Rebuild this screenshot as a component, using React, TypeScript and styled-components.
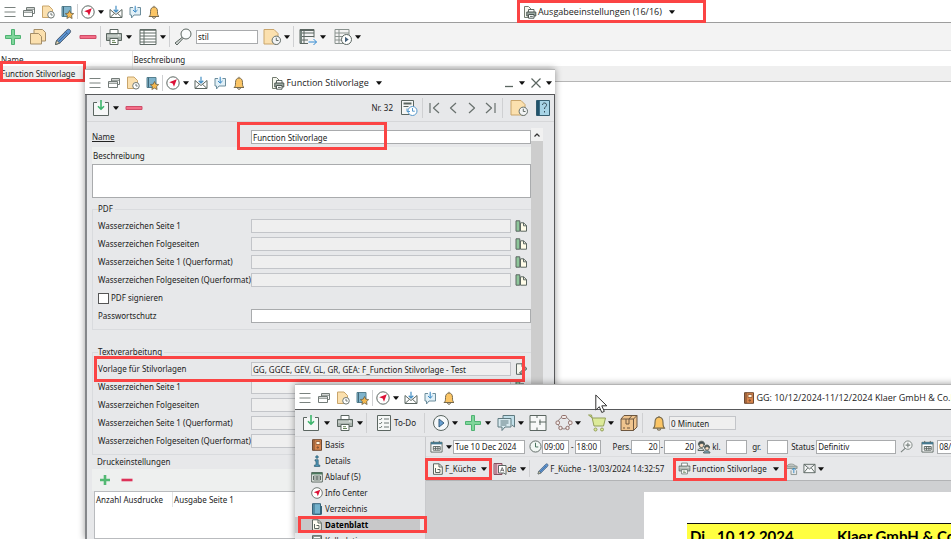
import React from "react";
import styled, { createGlobalStyle, css } from "styled-components";

const GlobalStyle = createGlobalStyle`
  *, *::before, *::after { box-sizing: border-box; }
  html, body { margin: 0; background: #fff; }
  body, button, input, textarea, select, table {
    font-family: "Noto Sans", "Open Sans", sans-serif;
    font-size: 8px;
    line-height: 12px;
    color: #222;
  }
`;

/* ---------- shared controls ---------- */

const IconButton = styled.button<{ $w?: number; $ml?: number }>`
  display: flex;
  flex: none;
  align-items: center;
  justify-content: center;
  width: ${(p) => p.$w ?? 18}px;
  margin: 0 0 0 ${(p) => p.$ml ?? 0}px;
  padding: 0;
  border: 0;
  background: none;
`;

const CaretShape = styled.svg`
  display: block;
  width: 6px;
  height: 4px;
  fill: #111;
`;

const Caret = ({ ml = 3, label = "Menü öffnen" }: { ml?: number; label?: string }) => (
  <IconButton $w={6} $ml={ml} aria-label={label}>
    <CaretShape viewBox="0 0 6 4"><path d="M0 .3h6L3.6 3.6H2.4z" /></CaretShape>
  </IconButton>
);

const Separator = styled.span<{ $l?: number; $r?: number }>`
  flex: none;
  align-self: stretch;
  width: 1px;
  margin: 3px ${(p) => p.$r ?? 3}px 3px ${(p) => p.$l ?? 3}px;
  background: #cfd0d2;
`;

const Spacer = styled.span<{ $grow: number }>`
  flex: ${(p) => p.$grow} 1 0;
`;

const Field = styled.input<{ $w?: number; $ml?: number; $muted?: boolean; $end?: boolean }>`
  flex: none;
  width: ${(p) => (p.$w ? `${p.$w}px` : "100%")};
  min-width: 0;
  height: 14px;
  margin: 0 0 0 ${(p) => p.$ml ?? 0}px;
  padding: 0 1px;
  border: 1px solid #a9abad;
  border-radius: 0;
  outline: 0;
  background: #fff;
  text-align: ${(p) => (p.$end ? "right" : "left")};
  ${(p) => p.$muted && css`
    border-color: #c3c5c9;
    background: #efefef;
  `}
`;

const Text = styled.span<{ $ml?: number }>`
  flex: none;
  margin-left: ${(p) => p.$ml ?? 0}px;
  white-space: nowrap;
`;

const LabelText = styled.label<{ $ml?: number; $w?: number }>`
  flex: none;
  width: ${(p) => (p.$w ? `${p.$w}px` : "auto")};
  margin-left: ${(p) => p.$ml ?? 0}px;
  white-space: nowrap;
`;

const TextButton = styled.button<{ $ml?: number; $gap?: number }>`
  display: flex;
  flex: none;
  align-items: center;
  gap: ${(p) => p.$gap ?? 2}px;
  margin: 0 0 0 ${(p) => p.$ml ?? 0}px;
  padding: 0;
  border: 0;
  background: none;
  white-space: nowrap;
`;

/* ---------- icons ---------- */

const Drawing = styled.svg`
  display: block;
  flex: none;
  overflow: visible;
  stroke-linejoin: round;
`;

type IconProps = { s?: number };
const INK = "#5b6661";

const icon = (size: number, box: number, body: React.ReactNode) =>
  function Icon({ s = size }: IconProps) {
    return (
      <Drawing width={s} height={s} viewBox={`0 0 ${box} ${box}`} fill="none" stroke={INK} strokeWidth={1} aria-hidden="true">
        {body}
      </Drawing>
    );
  };

const Hamburger = icon(14, 14, <path d="M1.500 2.500h11M1.500 7h11M1.500 11.500h11" stroke="#7a827f" />);
const Windows = icon(14, 14, <><path d="M4.500 5V2.500h8v6h-2M4.500 4.200h8" stroke="#737b78" /><path d="M1.500 5.500h9v6h-9zM1.500 7.200h9" fill="#fff" stroke="#737b78" /></>);
const DocClock = icon(14, 14, <>
  <path d="M1.500 1h6.500l3.500 3.500V12.500h-10z" fill="#fbe0ae" stroke="#c9a56b" />
  <circle cx="10" cy="9.800" r="3.300" fill="#fff" stroke="#707975" /><path d="M10 8v2h1.700" stroke="#707975" />
</>);
const BigDocClock = icon(18, 18, <>
  <path d="M1 1.500h10l4 4v10.500H1z" fill="#fbe0ae" stroke="#c9a56b" />
  <circle cx="13.300" cy="12.300" r="4.200" fill="#f2f3f3" stroke="#626d69" /><path d="M13.300 9.700v2.800h2.200" stroke="#626d69" />
</>);
const BookStar = icon(14, 14, <>
  <path d="M2 1.500h9v10H2z" fill="#7fb4cc" stroke="#56808f" /><path d="M3.500 1.500v10" stroke="#41687a" />
  <path d="M9.500 5.500l1.300 2.700 2.900.4-2.100 2 .5 2.900-2.600-1.400-2.600 1.400.5-2.900-2.100-2 2.900-.4z" fill="#f5b84e" stroke="#6c6146" strokeWidth=".8" />
</>);
const Compass = icon(14, 14, <><circle cx="7" cy="7" r="6.200" fill="#fff" /><path d="M10.800 3.200L8 10.800 6.700 7.400 3.200 6.200z" fill="#dc1237" stroke="none" /></>);
const MailIn = icon(14, 14, <>
  <path d="M1 4.500v8h12v-8M1 4.500l6 5 6-5M1 12.500l4.500-4.200M13 12.500L8.500 8.300" />
  <path d="M7 .8v6M4.700 4.800L7 7l2.300-2.200" stroke="#4790c4" strokeWidth="1.200" />
</>);
const ChatIn = icon(14, 14, <>
  <path d="M5 2.500H2V10h1.500v3L6 10h6.500V2.500h-3" fill="#e1f0f7" stroke="#6c8d9c" />
  <path d="M7.200.8v6.200M5 5l2.200 2.200L9.500 5" stroke="#3687c5" />
</>);
const Bell = icon(14, 14, <>
  <path d="M2 11.500c1.500-1 1.500-2.500 1.500-5 0-3 1.500-4.500 3.500-4.500s3.500 1.500 3.500 4.500c0 2.500 0 4 1.500 5z" fill="#fbc565" stroke="#77694b" />
  <path d="M5.500 12c.3 1.800 2.700 1.800 3 0M7 .8v1" stroke="#77694b" />
</>);
const PrintDoc = icon(14, 14, <>
  <path d="M5 12.500H1.500v-11h4L8 4" stroke="#737c70" fill="#f7f8f0" />
  <path d="M5.500 7V4.500H11V7" fill="#fff" /><path d="M3.800 7h9v4h-9z" fill="#9ba8a1" stroke="#4e5753" /><path d="M5.500 9.500H11v3.700H5.500z" fill="#fff" stroke="#4e5753" /><path d="M7 11.400h2.800" />
</>);
const Plus = icon(18, 18, <path d="M7.500 1.500h3v6h6v3h-6v6h-3v-6h-6v-3h6z" fill="#80d69b" stroke="#4fb373" />);
const SmallPlus = icon(12, 12, <path d="M6 1v10M1 6h10" stroke="#53b973" strokeWidth="2.600" />);
const Copy = icon(18, 18, <>
  <path d="M5 6V1.500h8.500l3 3V13h-4" fill="#fbe0ae" stroke="#a58e67" />
  <path d="M1.500 5.500h8l3 3v7.500h-11z" fill="#fbe0ae" stroke="#a58e67" />
</>);
const Pencil = icon(18, 18, <>
  <path d="M1.500 16.500l1.200-4.300L13 1.900c1-1 2.300-.7 3 0s.9 2 0 3L5.700 15.200z" fill="#5f95d1" stroke="#4b5d72" />
  <path d="M1.500 16.500l1.200-4.300 3 3z" fill="#f0dcb5" /><path d="M11.300 3.600l3 3M4.500 13.500L13 5" stroke="#3d6a9d" />
</>);
const Minus = icon(18, 18, <path d="M1 7.500h16v3H1z" fill="#f46d87" stroke="#cf4d68" />);
const SmallMinus = icon(12, 12, <path d="M.5 6h11" stroke="#dd3258" strokeWidth="2.600" />);
const Printer = icon(18, 18, <>
  <path d="M5 6V1.500h8V6" fill="#fff" /><path d="M1.500 5.500h15v7h-15z" fill="#a9b3ad" />
  <path d="M2 8h14" stroke="#dbe0dd" /><path d="M5 10.500h8v6H5z" fill="#fff" /><path d="M7 12.700h3M7 14.500h4" stroke="#67845a" /><path d="M12.800 7h1.500" stroke="#fff" />
</>);
const Rows = icon(18, 18, <><path d="M1 1.500h16v15H1zM5 1.500v15M1 5h16M1 8h16M1 11h16M1 14h16" fill="#fff" stroke="#606c67" /><path d="M1 2h16" strokeWidth="1.500" stroke="#606c67" /></>);
const Search = icon(18, 18, <><circle cx="12" cy="6" r="5" fill="#fafcfc" /><path d="M8 9.500l1 1-6 6.500-2-2z" fill="#d0d5d2" /></>);
const RowsArrow = icon(20, 20, <>
  <path d="M2 2.500h14v8M2 2.500v14h8M6 2.500v14M2 6h14M2 9.500h14M2 13h8" />
  <path d="M3 3v13" stroke="#76847e" strokeWidth="2" /><path d="M2 3h14" strokeWidth="2" />
  <path d="M10.500 15h8M15.500 12l3 3-3 3" stroke="#3189d1" />
</>);
const RowsPlay = icon(20, 20, <>
  <path d="M2 2.500h14v8M2 2.500v14h8M6 2.500v14M2 6h14M2 9.500h14M2 13h8" stroke="#89928e" />
  <circle cx="13.500" cy="12.500" r="5" fill="#fff" /><path d="M12 9.800v5.400l3.700-2.700z" fill="#435e78" stroke="none" />
</>);
const Save = icon(18, 18, <>
  <path d="M5 3.500H1.500v13h15v-13H13" fill="#f6f7f7" />
  <path d="M9 1v9M6 7.300l3 3 3-3" stroke="#3db56c" strokeWidth="1.600" />
</>);
const ReportClock = icon(18, 18, <>
  <path d="M1.500 1.500h12v14h-12z" fill="#f5f7f6" /><path d="M3.500 4.500h8" strokeWidth="2" /><path d="M3.500 7.500h5" />
  <circle cx="12.500" cy="12" r="4.500" fill="#fff" stroke="#5799cb" /><path d="M12.500 9v3.200h2.300M7 9.500v3h3" stroke="#5799cb" />
</>);
const First = icon(14, 14, <path d="M3 2v10M12 2L6.500 7l5.500 5" stroke="#69716e" strokeWidth="1.200" />);
const Prev = icon(14, 14, <path d="M10 2L4.500 7l5.500 5" stroke="#69716e" strokeWidth="1.200" />);
const Next = icon(14, 14, <path d="M4 2l5.500 5L4 12" stroke="#69716e" strokeWidth="1.200" />);
const Last = icon(14, 14, <path d="M2 2l5.500 5L2 12M11 2v10" stroke="#69716e" strokeWidth="1.200" />);
const HelpBook = icon(16, 16, <>
  <path d="M1.500.5h13v15h-13z" fill="#a7d4e6" stroke="#375f70" /><path d="M3.300.5v15" stroke="#21536b" strokeWidth="3" />
  <path d="M7.500 5c0-3 4.500-2.500 4 .3-.2 1.500-2 1.500-2 3.700M9.500 11v1.500" stroke="#344c58" />
</>);
const Minimize = icon(10, 10, <path d="M1 8.500h8" strokeWidth="1.300" />);
const Close = icon(12, 12, <path d="M1.500 1.500l9 9M10.500 1.500l-9 9" strokeWidth="1.200" />);
const PickDoc = icon(12, 12, <>
  <path d="M1 .8h3.800v10.400H1z" fill="#8ec69b" /><path d="M5.500 2.800h3l3 2.700v5.700h-6z" fill="#fffce8" /><path d="M8.500 2.800v3h3" />
</>);
const EditDoc = icon(12, 12, <>
  <path d="M1.500.8H7l2.500 2.500v8h-8zM7 .8v3h2.500" fill="#f7f8ef" /><path d="M4.500 10l5.800-6L12 5.700 6.200 11z" fill="#91a199" />
</>);
const UpArrow = icon(8, 8, <path d="M1.500 5.500L4 3l2.500 2.500" stroke="#333" strokeWidth="1.200" />);
const Checklist = icon(16, 16, <>
  <path d="M1.500.5h13v15h-13z" fill="#f6f8f7" /><path d="M8 4h5M8 8h5M8 12h5M3.300 4l1 1 1.700-2M3.300 8l1 1L6 7M3.300 12l1 1L6 11" stroke="#6d7774" />
</>);
const Play = icon(18, 18, <><circle cx="9" cy="9" r="7.500" fill="#f5f8fa" /><path d="M7 5v8l5-4z" fill="#669ed1" stroke="#3b607e" /></>);
const Chats = icon(18, 18, <>
  <path d="M6 4V1.500h11.500V13L15 11" fill="#c2e0ea" stroke="#5f7a80" />
  <path d="M1 4.500h13v8.500H8l-3 3.500V13H1z" fill="#d8eaf0" stroke="#5f7a80" /><path d="M3.500 7h8M3.500 9h8M3.500 11h6" stroke="#5f7a80" />
</>);
const Floor = icon(18, 18, <path d="M1 1.500h16v15H1zM1 8h6M10 8h7M11 5.500V11M8 1.500V4M8 13.500v3" fill="#f7f8f8" />);
const Network = icon(18, 18, <>
  <circle cx="9" cy="9" r="6" stroke="#8f7f7c" />
  <rect x="6.500" y="1.500" width="5" height="3" rx="1.200" fill="#f3ebe9" stroke="#8f6f6a" />
  <rect x="1" y="7" width="3.500" height="3.500" rx="1.200" fill="#f3ebe9" stroke="#8f6f6a" />
  <rect x="13.500" y="7" width="3.500" height="3.500" rx="1.200" fill="#f3ebe9" stroke="#8f6f6a" />
  <circle cx="5.500" cy="14" r="1.700" fill="#f3ebe9" stroke="#8f6f6a" />
  <circle cx="12.500" cy="14" r="1.700" fill="#f3ebe9" stroke="#8f6f6a" />
</>);
const Cart = icon(18, 18, <>
  <path d="M.5 1h3l2.500 11h9.500l2-8H4.300z" fill="#dcea99" stroke="#93a05a" />
  <circle cx="7.500" cy="15.500" r="1.500" fill="#dcea99" stroke="#93a05a" /><circle cx="14" cy="15.500" r="1.500" fill="#dcea99" stroke="#93a05a" />
</>);
const Box = icon(18, 18, <>
  <path d="M1 5l3-3.500h13v11.500l-3.500 3.500H1z" fill="#efc48e" stroke="#6d5740" /><path d="M1 5h12.500v11.500M13.500 5L17 1.500M6 5v5h3V5l3-3.500" stroke="#6d5740" /><path d="M3 14h2M7 14h3" stroke="#6d5740" />
</>);
const Calendar = icon(13, 14, <>
  <path d="M1 2.500h12v10.500H1z" fill="#fff" /><path d="M1 3.500h12" stroke="#457a91" strokeWidth="2.400" /><path d="M3.500 7h7.500v4H3.500zM6 7v4M8.500 7v4M3.500 9H11M4 1v2M10 1v2" />
</>);
const Clock = icon(13, 14, <><circle cx="7" cy="7" r="6" fill="#f2f7f4" /><path d="M7 3v4.500h3" stroke="#3b6950" /></>);
const People = icon(14, 14, <>
  <circle cx="4.500" cy="5" r="2.500" fill="#fadcc0" /><path d="M1.500 5c-1-5 7-5 6 0-1-2-4-2-6 0z" fill="#434d51" /><path d="M1 10.500c0-3 5-3 6 0z" fill="#d8dedb" />
  <circle cx="10" cy="8" r="2.200" fill="#fadcc0" /><path d="M7.500 8c-.5-4 5.500-4 5 0-1-1.500-3-2-5 0z" fill="#434d51" /><path d="M6.500 13c0-3 6.500-3 6.500 0z" fill="#7ba6c0" />
</>);
const ZoomPlus = icon(13, 14, <><circle cx="8.500" cy="5.500" r="4.500" fill="#f5f6f6" stroke="#7b8480" /><path d="M8.500 3v5M6 5.500h5M5.500 9L1 13" stroke="#7b8480" strokeWidth="1.200" /></>);
const Sheet = icon(12, 12, <>
  <path d="M1.500.8h5.800l3 3v7.500H1.500z" fill="#fffdf3" /><path d="M7 1v3h3M3.500 5v4.500H8V6.500H5.500" />
</>);
const Language = icon(14, 14, <>
  <path d="M1 1.500h8v11H1z" fill="#efb9ca" stroke="#82505f" /><path d="M3 1.500v11" stroke="#82505f" /><path d="M5.500 3.500H13v9l-2-1.500H5.500z" fill="#fff" /><path d="M7.500 9.500l1.700-4 1.700 4M8 8.300h2.500" stroke="#555" strokeWidth=".8" />
</>);
const Stamp = icon(13, 14, <>
  <path d="M2.500 4.500C2 1.500 11 1.500 11 4.500" fill="#d3d9d6" stroke="#8b9490" /><path d="M1 4.500h12v2.500H1z" fill="#b6c0bb" stroke="#8b9490" />
  <path d="M6.500 9v4.500h6V9" stroke="#8b9490" /><path d="M9.500 12V6.500M7.500 8.500l2-2 2 2" stroke="#358ac4" />
</>);
const Envelope = icon(13, 14, <path d="M1 2.500h12v9H1zM1 2.500l6 5 6-5M1 11.500l4-5M13 11.500l-4-5" fill="#f8f9f9" />);
const Binder = icon(12, 12, <><path d="M1.500.7h9v10.600h-9z" fill="#d9854b" stroke="#6e4a32" /><path d="M3 .7v10.600" stroke="#6e4a32" /><path d="M5 2.500h4v3H5z" fill="#fff5df" stroke="#a16843" /><circle cx="6.800" cy="8.500" r=".7" stroke="#6e4a32" /></>);
const Info = icon(12, 12, <><circle cx="6" cy="2" r="1.300" fill="#4d94b5" stroke="#315e73" strokeWidth=".7" /><path d="M4 4.700h3.200V10h1.600v1.500H3.400V10H5V6H4z" fill="#4d94b5" stroke="#315e73" strokeWidth=".7" /></>);
const Schedule = icon(12, 12, <><path d="M.7 1.500h10.600v9.500H.7z" fill="#f5faf6" /><path d="M.7 2.500h10.600" strokeWidth="2" stroke="#4c795e" /><path d="M2.500 5h7v4h-7zM6 5v4M2.500 7h7" /></>);
const Ledger = icon(12, 12, <><path d="M1.500.7h8v10.600h-8z" fill="#73b2cd" stroke="#36637a" /><path d="M3 .7v10.600M10.500 3v8.300H4" stroke="#36637a" /></>);
const Calculator = icon(12, 12, <><path d="M1.500.7h9v10.600h-9z" fill="#94a19b" /><path d="M3 2.500h6M3 5h1M5.500 5h1M8 5h1M3 7h1M5.500 7h1M8 7h1" stroke="#fff" /></>);

/* ---------- window frame ---------- */

const Desktop = styled.div`
  position: relative;
  height: 100vh;
  overflow: hidden;
`;

const Frame = styled.section<{ $x: number; $y: number; $w?: number; $beyond?: number }>`
  position: absolute;
  left: ${(p) => p.$x}px;
  top: ${(p) => p.$y}px;
  bottom: 0;
  ${(p) => (p.$w ? `width: ${p.$w}px;` : `right: -${p.$beyond ?? 0}px;`)}
  display: flex;
  flex-direction: column;
  border-top: 1px solid #b4b4b4;
  background: #e7e8ea;
  box-shadow: 0 0 7px rgba(0, 0, 0, 0.4);
`;

const TitleBar = styled.header<{ $dark?: boolean }>`
  display: flex;
  flex: none;
  align-items: center;
  height: ${(p) => (p.$dark ? 25 : 23)}px;
  padding: ${(p) => (p.$dark ? 2 : 1)}px 3px 0;
  border-bottom: 1px solid ${(p) => (p.$dark ? "#58595b" : "#9d9d9d")};
  background: #fff;
`;

const QuickTools = styled.div`
  display: flex;
  flex: none;
  align-items: center;
  align-self: stretch;
  gap: 5px;
`;

const QuickEnd = styled(QuickTools)`
  margin-left: 5px;
`;

const QuickActions = () => (
  <>
    <QuickTools>
      <IconButton $w={14} aria-label="Menü"><Hamburger /></IconButton>
      <IconButton $w={14} aria-label="Fenster"><Windows /></IconButton>
      <IconButton $w={14} aria-label="Verlauf"><DocClock /></IconButton>
      <IconButton $w={14} aria-label="Favoriten"><BookStar /></IconButton>
    </QuickTools>
    <Separator />
    <IconButton $w={14} aria-label="Info Center"><Compass /></IconButton>
    <Caret />
    <QuickEnd>
      <IconButton $w={14} aria-label="Posteingang"><MailIn /></IconButton>
      <IconButton $w={14} aria-label="Nachrichten"><ChatIn /></IconButton>
      <IconButton $w={14} aria-label="Erinnerungen"><Bell /></IconButton>
    </QuickEnd>
  </>
);

const Caption = styled.h1`
  display: flex;
  flex: none;
  align-items: center;
  gap: 1px;
  margin: 0;
  font-family: "Open Sans", "Noto Sans", sans-serif;
  font-size: 9px;
  font-weight: 400;
  line-height: 14px;
  white-space: nowrap;
`;

const Toolbar = styled.div<{ $h: number; $tone?: string; $pad?: number }>`
  display: flex;
  flex: none;
  align-items: center;
  height: ${(p) => p.$h}px;
  padding: 0 4px 0 ${(p) => p.$pad ?? 4}px;
  border-bottom: 1px solid #d6d7d9;
  background: ${(p) => p.$tone ?? "#e7e8ea"};
`;

/* ---------- list window ---------- */

const ResultTable = styled.table`
  width: 100%;
  table-layout: fixed;
  border-collapse: collapse;
  text-align: left;

  th, td {
    height: 15px;
    padding: 2px 1px 0;
    font-weight: 400;
    vertical-align: middle;
  }
  th:first-child, td:first-child {
    width: 132px;
    border-right: 1px solid #e4e4e4;
  }
  tbody tr {
    border-bottom: 1px solid #b5b5b5;
    background: #efefef;
  }
`;

const ListWindow = () => (
  <main>
    <TitleBar>
      <QuickActions />
      <Spacer $grow={363} />
      <Caption><PrintDoc />Ausgabeeinstellungen (16/16)</Caption>
      <Caret ml={7} />
      <Spacer $grow={274} />
    </TitleBar>
    <Toolbar $h={28} $tone="#f3f3f3">
      <IconButton aria-label="Neu"><Plus /></IconButton>
      <IconButton $ml={7} aria-label="Kopieren"><Copy /></IconButton>
      <IconButton $ml={7} aria-label="Bearbeiten"><Pencil /></IconButton>
      <IconButton $ml={7} aria-label="Löschen"><Minus /></IconButton>
      <Separator $r={4} />
      <IconButton aria-label="Drucken"><Printer /></IconButton>
      <Caret />
      <IconButton $ml={7} aria-label="Ansicht"><Rows /></IconButton>
      <Caret />
      <Separator $r={4} />
      <IconButton aria-label="Suchen"><Search /></IconButton>
      <Field $w={62} $ml={4} aria-label="Suchbegriff" defaultValue="stil" />
      <IconButton $ml={5} aria-label="Letzte Einträge"><BigDocClock /></IconButton>
      <Caret />
      <Separator $l={3} $r={4} />
      <IconButton $w={20} aria-label="Exportieren"><RowsArrow /></IconButton>
      <Caret ml={2} />
      <IconButton $w={20} $ml={7} aria-label="Ausführen"><RowsPlay /></IconButton>
      <Caret ml={2} />
    </Toolbar>
    <ResultTable>
      <thead><tr><th>Name</th><th>Beschreibung</th></tr></thead>
      <tbody><tr><td>Function Stilvorlage</td><td /></tr></tbody>
    </ResultTable>
  </main>
);

/* ---------- settings window ---------- */

const SettingsBody = styled.div`
  display: flex;
  flex: 1;
  flex-direction: column;
  min-height: 0;
  border-left: 2px solid #85878a;
  border-right: 1px solid #58595b;
`;

const ScrollArea = styled.div`
  display: flex;
  flex: 1;
  min-height: 0;
  padding: 0 11px 0 5px;
  overflow: hidden;
`;

const Form = styled.form`
  display: flex;
  flex: 1;
  flex-direction: column;
  min-width: 0;
  padding-top: 8px;
`;

const ScrollTrack = styled.div`
  display: flex;
  flex: none;
  flex-direction: column;
  width: 12px;
  padding-top: 6px;
`;

const ScrollUp = styled(IconButton)`
  height: 13px;
  background: #f1f1f1;
`;

const ScrollThumb = styled.div`
  flex: 1;
  background: #cdcdcd;
`;

const NameRow = styled.div`
  display: flex;
  flex: none;
  align-items: center;
  margin-bottom: 3px;

  input { flex: 1; }
  label { text-decoration: underline; }
`;

const Band = styled.div<{ $h: number }>`
  display: flex;
  flex: none;
  align-items: center;
  gap: 8px;
  height: ${(p) => p.$h}px;
  padding: 0 1px;
  background: #eef0ef;
`;

const Notes = styled.textarea`
  flex: none;
  height: 34px;
  margin: 0;
  padding: 1px;
  border: 1px solid #a9abad;
  border-radius: 0;
  background: #fff;
  resize: none;
`;

const Group = styled.fieldset<{ $top: number }>`
  flex: none;
  min-width: 0;
  margin: ${(p) => p.$top}px 0 0;
  padding: 2px 0 4px 5px;
  border: 1px solid #d9dbde;
  border-right: 0;

  legend {
    height: 12px;
    padding: 0 2px 0 0;
  }
`;

const FieldRow = styled.div`
  display: flex;
  align-items: center;
  height: 18px;

  input:not([type="checkbox"]) { flex: 1; }
`;

const Tick = styled.input`
  flex: none;
  width: 11px;
  height: 11px;
  margin: 0 2px 0 0;
  appearance: none;
  border: 1px solid #555;
  background: #fff;
`;

const SectionTitle = styled.h2`
  flex: none;
  height: 13px;
  margin: 1px 0 0 5px;
  font-size: 8px;
  font-weight: 400;
`;

const PrintTableBox = styled.div`
  flex: 1;
  min-height: 48px;
  margin-left: 2px;
  border: 1px solid #b9bbbe;
  background: #fff;
`;

const PrintTable = styled.table`
  border-collapse: collapse;
  text-align: left;

  th {
    height: 15px;
    padding: 0 9px 0 1px;
    border-right: 1px solid #e4e4e4;
    font-weight: 400;
    white-space: nowrap;
  }
  th + th { border: 0; }
`;

const WATERMARKS = [
  "Wasserzeichen Seite 1",
  "Wasserzeichen Folgeseiten",
  "Wasserzeichen Seite 1 (Querformat)",
  "Wasserzeichen Folgeseiten (Querformat)",
];

const WatermarkRows = ({ group }: { group: string }) => (
  <>
    {WATERMARKS.map((name, i) => (
      <FieldRow key={name}>
        <LabelText $w={153} htmlFor={`${group}-${i}`}>{name}</LabelText>
        <Field $muted id={`${group}-${i}`} readOnly value="" />
        <IconButton $w={20} type="button" aria-label={`${name} auswählen`}><PickDoc /></IconButton>
      </FieldRow>
    ))}
  </>
);

const SettingsWindow = () => (
  <Frame $x={85} $y={69} $w={470}>
    <TitleBar $dark>
      <QuickActions />
      <Spacer $grow={25} />
      <Caption><PrintDoc />Function Stilvorlage</Caption>
      <Caret ml={7} />
      <Spacer $grow={120} />
      <IconButton $w={10} aria-label="Minimieren"><Minimize /></IconButton>
      <Caret ml={5} />
      <IconButton $w={12} $ml={5} aria-label="Schließen"><Close /></IconButton>
      <Caret ml={4} />
    </TitleBar>
    <SettingsBody>
      <Toolbar $h={27} $pad={5}>
        <IconButton aria-label="Speichern"><Save /></IconButton>
        <Caret />
        <IconButton $ml={6} aria-label="Löschen"><Minus /></IconButton>
        <Spacer $grow={1} />
        <Text>Nr. 32</Text>
        <IconButton $ml={7} aria-label="Änderungsverlauf"><ReportClock /></IconButton>
        <Separator $l={4} $r={4} />
        <IconButton $w={14} aria-label="Erster"><First /></IconButton>
        <IconButton $w={14} $ml={5} aria-label="Vorheriger"><Prev /></IconButton>
        <IconButton $w={14} $ml={5} aria-label="Nächster"><Next /></IconButton>
        <IconButton $w={14} $ml={5} aria-label="Letzter"><Last /></IconButton>
        <Separator $l={4} $r={7} />
        <IconButton aria-label="Verlauf"><BigDocClock /></IconButton>
        <IconButton $w={14} $ml={8} aria-label="Hilfe"><HelpBook /></IconButton>
      </Toolbar>
      <ScrollArea>
        <Form>
          <NameRow>
            <LabelText $w={159} htmlFor="name">Name</LabelText>
            <Field id="name" defaultValue="Function Stilvorlage" />
          </NameRow>
          <Band $h={17}><LabelText htmlFor="notes">Beschreibung</LabelText></Band>
          <Notes id="notes" />
          <Group $top={5}>
            <legend>PDF</legend>
            <WatermarkRows group="pdf" />
            <FieldRow>
              <Tick type="checkbox" id="sign" />
              <LabelText htmlFor="sign">PDF signieren</LabelText>
            </FieldRow>
            <FieldRow>
              <LabelText $w={153} htmlFor="password">Passwortschutz</LabelText>
              <Field id="password" />
            </FieldRow>
          </Group>
          <Group $top={16}>
            <legend>Textverarbeitung</legend>
            <FieldRow>
              <LabelText $w={153} htmlFor="template">Vorlage für Stilvorlagen</LabelText>
              <Field $muted id="template" readOnly value="GG, GGCE, GEV, GL, GR, GEA: F_Function Stilvorlage - Test" />
              <IconButton $w={20} type="button" aria-label="Vorlage bearbeiten"><EditDoc /></IconButton>
            </FieldRow>
            <WatermarkRows group="text" />
          </Group>
          <SectionTitle>Druckeinstellungen</SectionTitle>
          <Band $h={22}>
            <IconButton $w={16} type="button" $ml={4} aria-label="Zeile hinzufügen"><SmallPlus /></IconButton>
            <IconButton $w={12} type="button" aria-label="Zeile entfernen"><SmallMinus /></IconButton>
          </Band>
          <PrintTableBox>
            <PrintTable><thead><tr><th>Anzahl Ausdrucke</th><th>Ausgabe Seite 1</th></tr></thead></PrintTable>
          </PrintTableBox>
        </Form>
        <ScrollTrack>
          <ScrollUp $w={12} aria-label="Nach oben"><UpArrow /></ScrollUp>
          <ScrollThumb />
        </ScrollTrack>
      </ScrollArea>
    </SettingsBody>
  </Frame>
);

/* ---------- event window ---------- */

const EventBody = styled.div`
  display: flex;
  flex: 1;
  min-height: 0;
  overflow: hidden;
`;

const Nav = styled.nav`
  flex: none;
  width: 131px;
  border-right: 1px solid #c9cacd;
`;

const NavItem = styled.a<{ $active?: boolean }>`
  display: flex;
  align-items: center;
  gap: 2px;
  height: 16px;
  margin-right: 5px;
  padding-left: 16px;
  color: inherit;
  text-decoration: none;
  ${(p) => p.$active && css`
    background: #c8c8c9;
    font-weight: 700;
    color: #000;
  `}
`;

const Content = styled.div`
  display: flex;
  flex: 1;
  flex-direction: column;
  min-width: 0;
`;

const Line = styled.div<{ $h: number; $edge?: boolean }>`
  display: flex;
  flex: none;
  align-items: center;
  height: ${(p) => p.$h}px;
  padding-left: 4px;
  border-bottom: 1px solid ${(p) => (p.$edge ? "#b2b3b5" : "#dcdddf")};
`;

const Viewer = styled.div`
  flex: 1;
  min-height: 0;
  padding: 11px 0 0 218px;
  background: #cfd0d2;
  overflow: hidden;
`;

const Paper = styled.article`
  height: 100%;
  padding: 31px 0 0 43px;
  background: #fff;
`;

const DayBanner = styled.h2`
  display: flex;
  height: 28px;
  margin: 0;
  padding: 1px 3px;
  border-top: 1px solid #111;
  background: #ffff41;
  font-family: Lato, "Open Sans", sans-serif;
  font-size: 15px;
  font-weight: 700;
  line-height: 22px;
  color: #000;
  white-space: nowrap;
`;

const BannerPart = styled.span<{ $w?: number }>`
  flex: none;
  width: ${(p) => (p.$w ? `${p.$w}px` : "auto")};
`;

const NAV = [
  { label: "Basis", Icon: Binder },
  { label: "Details", Icon: Info },
  { label: "Ablauf (5)", Icon: Schedule },
  { label: "Info Center", Icon: Compass },
  { label: "Verzeichnis", Icon: Ledger },
  { label: "Datenblatt", Icon: Sheet, active: true },
  { label: "Kalkulation", Icon: Calculator },
];

const EventWindow = () => (
  <Frame $x={295} $y={384} $beyond={8}>
    <TitleBar $dark>
      <QuickActions />
      <Spacer $grow={1} />
      <Caption><Binder />GG: 10/12/2024-11/12/2024 Klaer GmbH &amp; Co.K</Caption>
    </TitleBar>
    <Toolbar $h={27} $pad={7}>
      <IconButton aria-label="Speichern"><Save /></IconButton>
      <Caret ml={4} />
      <IconButton $ml={6} aria-label="Drucken"><Printer /></IconButton>
      <Caret />
      <Separator $l={3} $r={9} />
      <TextButton $gap={2}><Checklist />To-Do</TextButton>
      <Separator $l={8} $r={7} />
      <IconButton aria-label="Starten"><Play /></IconButton>
      <Caret ml={2} />
      <IconButton $ml={6} aria-label="Hinzufügen"><Plus /></IconButton>
      <Caret />
      <IconButton $ml={6} aria-label="Kommentare"><Chats /></IconButton>
      <Caret />
      <IconButton $ml={5} aria-label="Raumplan"><Floor /></IconButton>
      <IconButton $ml={8} aria-label="Verknüpfungen"><Network /></IconButton>
      <Caret ml={2} />
      <IconButton $ml={7} aria-label="Bestellung"><Cart /></IconButton>
      <Caret ml={2} />
      <IconButton $ml={6} aria-label="Artikel"><Box /></IconButton>
      <Separator $l={4} $r={8} />
      <IconButton $w={16} aria-label="Erinnerung"><Bell s={16} /></IconButton>
      <Field $muted $w={67} $ml={2} aria-label="Erinnerung in" readOnly value="0 Minuten" />
    </Toolbar>
    <EventBody>
      <Nav aria-label="Bereiche">
        {NAV.map(({ label, Icon, active }) => (
          <NavItem key={label} href="#" $active={active} aria-current={active ? "page" : undefined}>
            <Icon s={12} />{label}
          </NavItem>
        ))}
      </Nav>
      <Content>
        <Line $h={20}>
          <IconButton $w={13} aria-label="Kalender"><Calendar /></IconButton>
          <Caret />
          <Field $w={72} $ml={1} aria-label="Datum" defaultValue="Tue 10 Dec 2024" />
          <IconButton $w={13} $ml={4} aria-label="Uhrzeit"><Clock /></IconButton>
          <Field $w={27} aria-label="Von" defaultValue="09:00" />
          <Text $ml={2}>-</Text>
          <Field $w={26} $ml={1} aria-label="Bis" defaultValue="18:00" />
          <LabelText $ml={12} $w={18} htmlFor="persons">Pers.</LabelText>
          <Field $w={29} $end id="persons" defaultValue="20" />
          <Text $ml={1}>-</Text>
          <Field $w={32} $ml={1} $end aria-label="Personen bis" defaultValue="20" />
          <IconButton $w={14} $ml={1} aria-label="Personen"><People /></IconButton>
          <LabelText $ml={1} $w={14} htmlFor="small">kl.</LabelText>
          <Field $w={21} id="small" />
          <LabelText $ml={5} $w={15} htmlFor="large">gr.</LabelText>
          <Field $w={21} id="large" />
          <LabelText $ml={3} $w={25} htmlFor="status">Status</LabelText>
          <Field $w={80} id="status" defaultValue="Definitiv" />
          <IconButton $w={13} $ml={4} aria-label="Status suchen"><ZoomPlus /></IconButton>
          <IconButton $w={13} $ml={8} aria-label="Kalender"><Calendar /></IconButton>
          <Field $w={60} $ml={3} aria-label="Optionsdatum" defaultValue="08/12/2024" />
        </Line>
        <Line $h={24} $edge>
          <TextButton $ml={2} $gap={1}><Sheet />F_Küche</TextButton>
          <Caret ml={5} />
          <TextButton $ml={6} $gap={0}><Language />de</TextButton>
          <Caret ml={4} />
          <Separator $l={3} $r={7} />
          <TextButton $gap={1}><Pencil s={12} />F_Küche - 13/03/2024 14:32:57</TextButton>
          <TextButton $ml={14} $gap={1}><Printer s={13} />Function Stilvorlage</TextButton>
          <Caret ml={6} />
          <IconButton $w={13} $ml={6} aria-label="Freigeben"><Stamp /></IconButton>
          <IconButton $w={13} $ml={5} aria-label="Senden"><Envelope /></IconButton>
          <Caret ml={2} />
        </Line>
        <Viewer>
          <Paper>
            <DayBanner>
              <BannerPart $w={27}>Di</BannerPart>
              <BannerPart $w={120}>10.12.2024</BannerPart>
              <BannerPart>Klaer GmbH &amp; Co.KG</BannerPart>
            </DayBanner>
          </Paper>
        </Viewer>
      </Content>
    </EventBody>
  </Frame>
);

/* ---------- callouts and pointer ---------- */

const Callout = styled.div<{ $x: number; $y: number; $w: number; $h: number }>`
  position: absolute;
  left: ${(p) => p.$x}px;
  top: ${(p) => p.$y}px;
  width: ${(p) => p.$w}px;
  height: ${(p) => p.$h}px;
  border: 3px solid #fb4444;
  pointer-events: none;
`;

const Pointer = styled.svg`
  position: absolute;
  left: 595px;
  top: 394px;
  width: 13px;
  height: 20px;
`;

export default function App() {
  return (
    <Desktop>
      <GlobalStyle />
      <ListWindow />
      <Callout $x={517} $y={0} $w={189} $h={23} />
      <Callout $x={0} $y={61} $w={86} $h={21} />
      <SettingsWindow />
      <Callout $x={237} $y={122} $w={150} $h={28} />
      <Callout $x={94} $y={356} $w={431} $h={26} />
      <EventWindow />
      <Callout $x={425} $y={458} $w={67} $h={22} />
      <Callout $x={673} $y={458} $w={114} $h={23} />
      <Callout $x={298} $y={516} $w={129} $h={17} />
      <Pointer viewBox="0 0 13 20" aria-hidden="true">
        <path d="M.8 1v15l3.500-3.300 2.500 5.800 2.500-1.100-2.500-5.600h5z" fill="#fff" stroke="#333" strokeWidth="1" />
      </Pointer>
    </Desktop>
  );
}
